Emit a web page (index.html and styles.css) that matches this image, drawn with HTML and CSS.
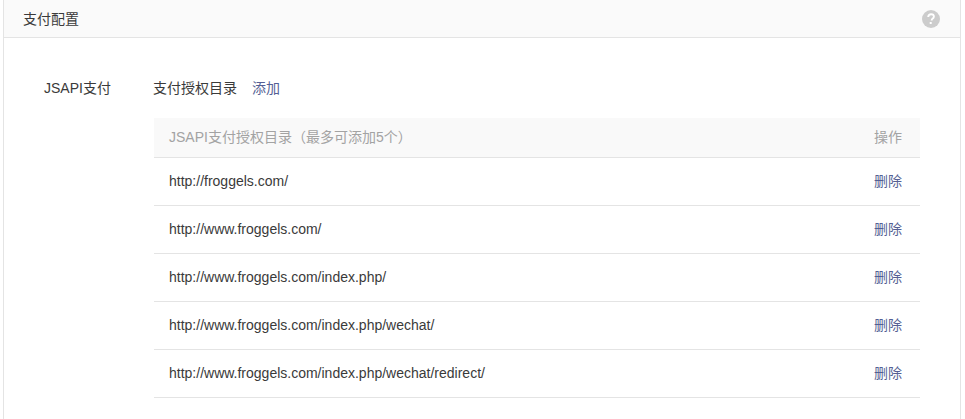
FILE: index.html
```html
<!DOCTYPE html>
<html lang="zh-CN">
<head>
<meta charset="utf-8">
<title>支付配置</title>
<link rel="stylesheet" href="styles.css">
</head>
<body>
<section class="panel">
  <header class="panel-head">
    <h1 class="panel-title">支付配置</h1>
    <svg class="help" width="18" height="18" viewBox="0 0 18 18" aria-hidden="true">
      <circle cx="9" cy="9" r="9" fill="#cccccc"/>
      <path d="M6.2 7c0-1.8 1.2-2.8 2.9-2.8 1.7 0 2.8 1 2.8 2.4 0 1-.5 1.6-1.4 2.2-.6.4-.8.7-.8 1.4v.3" fill="none" stroke="#fff" stroke-width="1.9"/>
      <rect x="7.7" y="12" width="2" height="2" fill="#fff"/>
    </svg>
  </header>
  <div class="panel-body">
    <div class="side-label">JSAPI支付</div>
    <div class="content">
      <div class="content-head">
        <span>支付授权目录</span>
        <a class="link" href="#">添加</a>
      </div>
      <table class="dirs">
        <thead>
          <tr><th>JSAPI支付授权目录（最多可添加5个）</th><th class="op">操作</th></tr>
        </thead>
        <tbody>
          <tr><td>http://froggels.com/</td><td class="op"><a class="link" href="#">删除</a></td></tr>
          <tr><td>http://www.froggels.com/</td><td class="op"><a class="link" href="#">删除</a></td></tr>
          <tr><td>http://www.froggels.com/index.php/</td><td class="op"><a class="link" href="#">删除</a></td></tr>
          <tr><td>http://www.froggels.com/index.php/wechat/</td><td class="op"><a class="link" href="#">删除</a></td></tr>
          <tr><td>http://www.froggels.com/index.php/wechat/redirect/</td><td class="op"><a class="link" href="#">删除</a></td></tr>
        </tbody>
      </table>
    </div>
  </div>
</section>
</body>
</html>
```
FILE: styles.css
```css
html, body {
  margin: 0;
  padding: 0;
  background: #fff;
  height: 100%;
  overflow: hidden;
}
body {
  font-family: "Liberation Sans", "Noto Sans CJK SC", sans-serif;
  font-size: 14px;
  color: #3a3a3a;
}
.panel {
  margin: 0 4px 0 3px;
  min-height: 419px;
  box-sizing: border-box;
  border-left: 1px solid #e4e4e4;
  border-right: 1px solid #e4e4e4;
}
.panel-head {
  height: 37px;
  display: flex;
  align-items: center;
  justify-content: space-between;
  padding: 0 20px 0 19px;
  background: #fafafa;
  border-bottom: 1px solid #e4e4e4;
}
.panel-title {
  margin: 0 0 2px;
  font-size: 14px;
  font-weight: 400;
}
.help { display: block; }
.panel-body {
  display: flex;
  padding: 38px 40px 0 40px;
}
.side-label {
  width: 110px;
  line-height: 24px;
  flex: none;
}
.content { flex: 1; }
.content-head {
  display: flex;
  gap: 15px;
  line-height: 24px;
  margin-bottom: 18px;
  margin-left: -1px;
}
.link {
  color: #555f94;
  text-decoration: none;
}
.dirs {
  width: 100%;
  border-collapse: collapse;
}
.dirs th {
  height: 39px;
  padding: 0 18px 3px 15px;
  box-sizing: border-box;
  background: #f9f9f9;
  color: #a3a3a3;
  font-weight: 400;
  text-align: left;
  white-space: nowrap;
  border-bottom: 1px solid #e4e4e4;
}
.dirs td {
  height: 48px;
  padding: 0 18px 0 15px;
  box-sizing: border-box;
  white-space: nowrap;
  border-bottom: 1px solid #e4e4e4;
}
.dirs td.op { padding-bottom: 2px; }
.dirs .op { text-align: right; width: 80px; }
```
